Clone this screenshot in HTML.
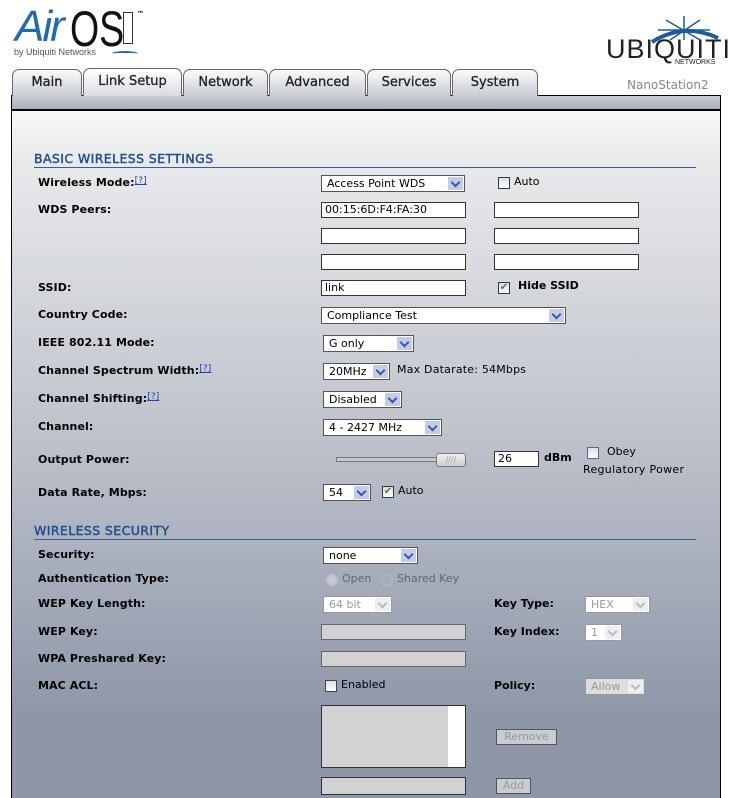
<!DOCTYPE html>
<html style="overflow:hidden;height:798px"><head><meta charset="utf-8"><style>
*{margin:0;padding:0;box-sizing:border-box}
body{width:732px;height:798px;overflow:hidden;background:#fff;font-family:"DejaVu Sans","Liberation Sans",sans-serif;font-size:11px;color:#000;position:relative}
.a{position:absolute;white-space:nowrap}
.panel{position:absolute;left:11px;top:95px;width:710px;height:703px;border:1px solid #000;border-top:none;border-bottom:none;background:linear-gradient(#fdfdfd 0px,#e9eaec 60px,#c4c8d0 300px,#a3aab8 500px,#8e97a8 620px)}
.band{position:absolute;left:11px;top:95px;width:710px;height:16px;background:linear-gradient(#c8ccd4,#a9afbb);border:1px solid #000;border-width:1px 1px 2px 1px}
.tab{position:absolute;top:69px;height:27px;border:1px solid #666;border-bottom:none;border-radius:7px 7px 0 0;background:linear-gradient(#fbfbfb,#dcdfe4 60%,#c8ccd3);font-family:"DejaVu Sans",sans-serif;font-size:13px;color:#222;text-align:center;line-height:26px;-webkit-text-stroke:.3px #222}
.tab.on{background:linear-gradient(#fff,#e8eaee 60%,#d7dae0);top:68px;height:28px}
.lbl{position:absolute;left:38px;font-weight:bold;font-size:11px;white-space:nowrap;letter-spacing:.1px}
.h{position:absolute;left:34px;font-size:12.5px;color:#1f4e8c;letter-spacing:.4px;-webkit-text-stroke:.4px #1f4e8c}
.hl{position:absolute;left:34px;width:662px;height:1px;background:#3a5f8c}
.inp{position:absolute;height:16px;width:145px;border:1px solid #333;background:#fff;font-size:11px;padding-left:3px;line-height:14px}
.dis{background:#d2d2d2;border-color:#666}
.sel{position:absolute;height:17px;border:1px solid #555;background:#fff;font-size:11px;padding-left:5px;line-height:15px}
.sel i{position:absolute;right:1px;top:1px;width:15px;height:13px;background:#c3cdea;font-style:normal}
.sel i:after{content:"";position:absolute;left:4px;top:2px;width:5px;height:5px;border:solid #3c5aa0;border-width:0 2px 2px 0;transform:rotate(45deg)}
.sel.d{color:#999;border-color:#999}
.sel.d i{background:#eee}
.sel.d i:after{border-color:#bbb}
.cb{position:absolute;width:12px;height:12px;border:1px solid #2a3a55;background:linear-gradient(#ddd,#fff)}
.q{font-weight:normal;color:#2040c0;text-decoration:underline;font-size:9px;vertical-align:top}
.btn{position:absolute;height:16px;border:1px solid #555;background:#c8ccd3;color:#999;font-size:11px;text-align:center;line-height:14px}
</style></head><body>
<div class="a" style="left:15px;top:2px;font-family:'Liberation Sans',sans-serif;font-size:44px;font-style:italic;color:#1f6ab0;letter-spacing:-2px">Air</div>
<div class="a" style="left:70px;top:0px;font-family:'Liberation Sans',sans-serif;font-size:50px;color:#111;transform:scaleX(.75);transform-origin:left">OS</div>
<div class="a" style="left:123px;top:12px;width:10px;height:32px;border:1px solid #333"></div>
<div class="a" style="left:137px;top:10px;font-size:7px;font-weight:bold">™</div>
<div class="a" style="left:14px;top:47px;font-size:9px;color:#555;font-family:'Liberation Sans',sans-serif">by Ubiquiti Networks</div>
<div class="a" style="left:112px;top:51px;width:26px;height:5px;border-top:2px solid #1f6ab0;border-radius:50% 50% 0 0"></div>
<svg class="a" style="left:648px;top:14px" width="72" height="30"><path d="M4 28 Q36 8 70 24" stroke="#1f5aa0" stroke-width="4" fill="none"/><path d="M36 2 L36 26 M18 6 L52 26 M52 6 L22 26 M10 16 L62 16" stroke="#1f5aa0" stroke-width="1.5"/></svg>
<div class="a" style="left:606px;top:34px;font-family:'Liberation Sans',sans-serif;font-size:27px;color:#222;letter-spacing:1px">UBIQUITI</div>
<div class="a" style="left:675px;top:59px;font-family:'Liberation Sans',sans-serif;font-size:7px;color:#222">NETWORKS</div>
<div class="a" style="left:627px;top:78px;font-size:12px;color:#888">NanoStation2</div>
<div class="panel"></div>
<div class="band"></div>
<div class="tab" style="left:12px;width:70px">Main</div>
<div class="tab on" style="left:83px;width:99px">Link Setup</div>
<div class="tab" style="left:183px;width:85px">Network</div>
<div class="tab" style="left:269px;width:97px">Advanced</div>
<div class="tab" style="left:367px;width:84px">Services</div>
<div class="tab" style="left:452px;width:86px">System</div>

<div class="h" style="top:151px">BASIC WIRELESS SETTINGS</div><div class="hl" style="top:167px"></div>
<div class="lbl" style="top:176px">Wireless Mode:<span class="q">[?]</span></div>
<div class="sel" style="left:321px;top:175px;width:144px">Access Point WDS<i></i></div>
<div class="cb" style="left:498px;top:177px"></div><div class="a" style="left:514px;top:175px">Auto</div>
<div class="lbl" style="top:203px">WDS Peers:</div>
<div class="inp" style="left:321px;top:202px">00:15:6D:F4:FA:30</div><div class="inp" style="left:494px;top:202px"></div>
<div class="inp" style="left:321px;top:228px"></div><div class="inp" style="left:494px;top:228px"></div>
<div class="inp" style="left:321px;top:254px"></div><div class="inp" style="left:494px;top:254px"></div>
<div class="lbl" style="top:281px">SSID:</div>
<div class="inp" style="left:321px;top:280px">link</div>
<div class="cb" style="left:498px;top:282px;color:#3a8a2a;font-size:10px;line-height:10px;text-align:center">✔</div><div class="a" style="left:518px;top:279px;font-weight:bold">Hide SSID</div>
<div class="lbl" style="top:308px">Country Code:</div>
<div class="sel" style="left:321px;top:307px;width:245px">Compliance Test<i></i></div>
<div class="lbl" style="top:336px">IEEE 802.11 Mode:</div>
<div class="sel" style="left:323px;top:335px;width:91px">G only<i></i></div>
<div class="lbl" style="top:364px">Channel Spectrum Width:<span class="q">[?]</span></div>
<div class="sel" style="left:323px;top:363px;width:67px">20MHz<i></i></div>
<div class="a" style="left:397px;top:363px;letter-spacing:.2px">Max Datarate: 54Mbps</div>
<div class="lbl" style="top:392px">Channel Shifting:<span class="q">[?]</span></div>
<div class="sel" style="left:323px;top:391px;width:79px">Disabled<i></i></div>
<div class="lbl" style="top:420px">Channel:</div>
<div class="sel" style="left:323px;top:419px;width:119px">4 - 2427 MHz<i></i></div>
<div class="lbl" style="top:453px">Output Power:</div>
<div class="a" style="left:336px;top:457px;width:102px;height:5px;background:#c8c8c8;border:1px solid #777"></div>
<div class="a" style="left:436px;top:453px;width:30px;height:14px;border:1px solid #777;border-radius:3px;background:linear-gradient(#f2f2f2,#ccc);font-size:8px;color:#999;text-align:center;line-height:12px">////</div>
<div class="inp" style="left:494px;top:451px;width:45px">26</div>
<div class="a" style="left:544px;top:451px;font-weight:bold">dBm</div>
<div class="cb" style="left:587px;top:447px;border-color:#667"></div><div class="a" style="left:607px;top:445px">Obey</div>
<div class="a" style="left:583px;top:463px;letter-spacing:.3px">Regulatory Power</div>
<div class="lbl" style="top:486px">Data Rate, Mbps:</div>
<div class="sel" style="left:323px;top:484px;width:48px">54<i></i></div>
<div class="cb" style="left:382px;top:486px;color:#3a8a2a;font-size:10px;line-height:10px;text-align:center">✔</div><div class="a" style="left:398px;top:484px">Auto</div>

<div class="h" style="top:523px">WIRELESS SECURITY</div><div class="hl" style="top:539px"></div>
<div class="lbl" style="top:548px">Security:</div>
<div class="sel" style="left:323px;top:547px;width:95px">none<i></i></div>
<div class="lbl" style="top:572px">Authentication Type:</div>
<div class="a" style="left:326px;top:574px;width:12px;height:12px;border-radius:50%;border:1px solid #bbb;background:#c4c8cf"></div>
<div class="a" style="left:342px;top:572px;color:#666">Open</div>
<div class="a" style="left:381px;top:574px;width:12px;height:12px;border-radius:50%;border:1px solid #bbb"></div>
<div class="a" style="left:397px;top:572px;color:#666">Shared Key</div>
<div class="lbl" style="top:597px">WEP Key Length:</div>
<div class="sel d" style="left:323px;top:596px;width:69px">64 bit<i></i></div>
<div class="a" style="left:494px;top:597px;font-weight:bold">Key Type:</div>
<div class="sel d" style="left:585px;top:596px;width:65px">HEX<i></i></div>
<div class="lbl" style="top:625px">WEP Key:</div>
<div class="inp dis" style="left:321px;top:624px"></div>
<div class="a" style="left:494px;top:625px;font-weight:bold">Key Index:</div>
<div class="sel d" style="left:585px;top:624px;width:37px">1<i></i></div>
<div class="lbl" style="top:652px">WPA Preshared Key:</div>
<div class="inp dis" style="left:321px;top:651px"></div>
<div class="lbl" style="top:679px">MAC ACL:</div>
<div class="cb" style="left:325px;top:680px;border-color:#445"></div><div class="a" style="left:341px;top:678px">Enabled</div>
<div class="a" style="left:494px;top:679px;font-weight:bold">Policy:</div>
<div class="sel d" style="left:585px;top:678px;width:60px;background:#ddd">Allow<i></i></div>
<div class="a" style="left:321px;top:705px;width:145px;height:63px;border:1px solid #333;background:#d2d2d2"><div style="position:absolute;right:0;top:0;width:17px;height:61px;background:#fff"></div></div>
<div class="btn" style="left:496px;top:729px;width:61px">Remove</div>
<div class="inp dis" style="left:321px;top:777px;height:18px;border-color:#333"></div>
<div class="btn" style="left:496px;top:778px;width:35px">Add</div>
</body></html>
